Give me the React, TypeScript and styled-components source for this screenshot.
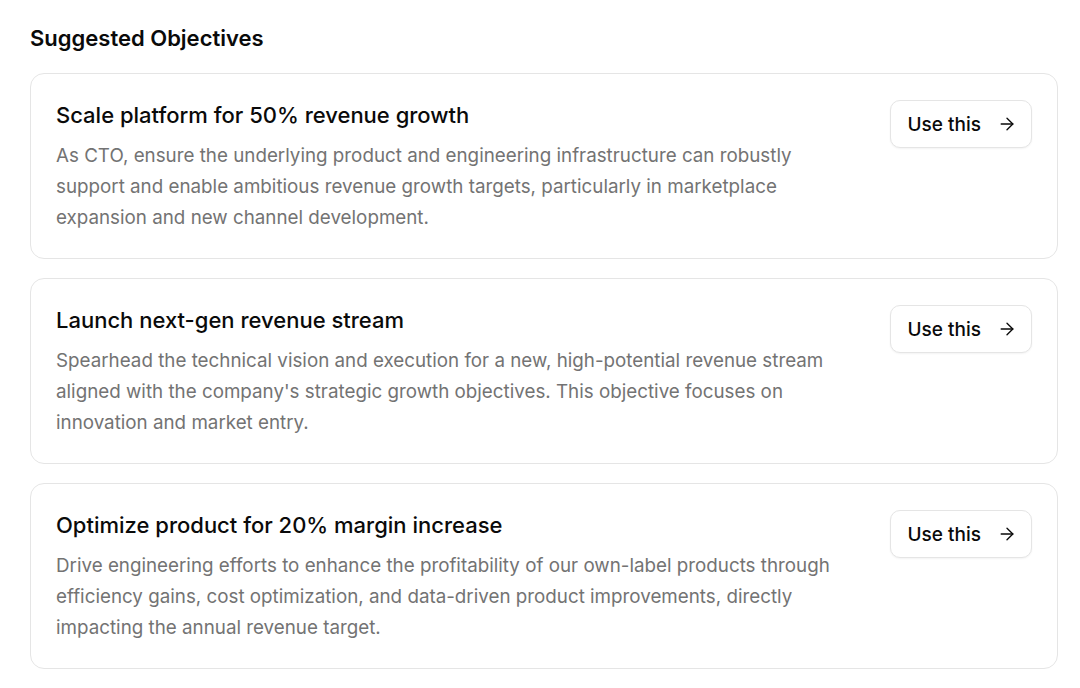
import React from 'react'
import styled, { createGlobalStyle } from 'styled-components'
import { ArrowRight } from 'lucide-react'

type Objective = {
  title: string
  description: string
}

const objectives: Objective[] = [
  {
    title: 'Scale platform for 50% revenue growth',
    description:
      'As CTO, ensure the underlying product and engineering infrastructure can robustly support and enable ambitious revenue growth targets, particularly in marketplace expansion and new channel development.',
  },
  {
    title: 'Launch next-gen revenue stream',
    description:
      "Spearhead the technical vision and execution for a new, high-potential revenue stream aligned with the company's strategic growth objectives. This objective focuses on innovation and market entry.",
  },
  {
    title: 'Optimize product for 20% margin increase',
    description:
      'Drive engineering efforts to enhance the profitability of our own-label products through efficiency gains, cost optimization, and data-driven product improvements, directly impacting the annual revenue target.',
  },
]

const App = () => {
  return (
    <>
      <GlobalStyle />
      <Page>
        <Heading>Suggested Objectives</Heading>
        <List>
          {objectives.map((item) => (
            <Card key={item.title}>
              <Body>
                <Title>{item.title}</Title>
                <Description>{item.description}</Description>
              </Body>
              <UseButton type="button">
                Use this
                <ArrowRight size={20} strokeWidth={1.6} />
              </UseButton>
            </Card>
          ))}
        </List>
      </Page>
    </>
  )
}

export default App

const GlobalStyle = createGlobalStyle`
  html, body {
    margin: 0;
    background: #ffffff;
  }
  body {
    font-family: Inter, "Noto Sans", sans-serif;
    -webkit-font-smoothing: antialiased;
  }
`

const Page = styled.main`
  padding: 24px 22px 20px 30px;
`

const Heading = styled.h2`
  margin: 0 0 21px;
  font-size: 22px;
  line-height: 28px;
  font-weight: 600;
  color: #0a0a0a;
`

const List = styled.div`
  display: flex;
  flex-direction: column;
  gap: 19px;
`

const Card = styled.section`
  display: flex;
  align-items: flex-start;
  gap: 29px;
  padding: 24px 25px 25px 25px;
  border: 1px solid #e5e5e5;
  border-radius: 14px;
  background: #ffffff;
`

const Body = styled.div`
  flex: 1;
  display: flex;
  flex-direction: column;
  gap: 8px;
`

const Title = styled.h3`
  margin: 0;
  font-size: 22px;
  line-height: 34px;
  font-weight: 500;
  color: #0a0a0a;
`

const Description = styled.p`
  margin: 0;
  font-size: 18.8px;
  line-height: 31px;
  font-weight: 400;
  color: #737373;
`

const UseButton = styled.button`
  display: inline-flex;
  align-items: center;
  gap: 16px;
  flex-shrink: 0;
  margin-top: 2px;
  height: 48px;
  padding: 0 14px 0 17px;
  border: 1px solid #e5e5e5;
  border-radius: 10px;
  background: #ffffff;
  box-shadow: 0 1px 2px rgba(0, 0, 0, 0.05);
  font-family: Inter, "Noto Sans", sans-serif;
  font-size: 19px;
  font-weight: 500;
  color: #0a0a0a;
  cursor: pointer;
`
